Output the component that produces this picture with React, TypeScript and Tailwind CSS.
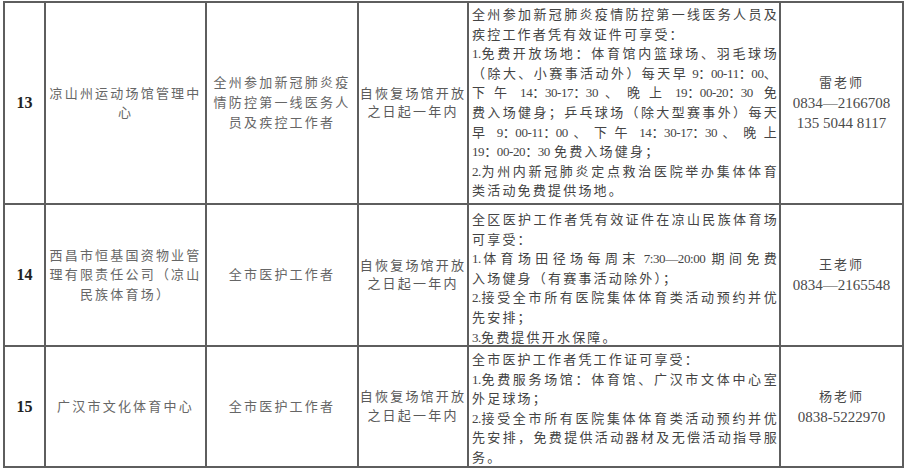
import React from "react";

type Line = { t: string; j?: boolean };

interface Row {
  no: string;
  org: string[];
  who: string[];
  when: string[];
  pt: string;
  detail: Line[];
  contact: string[];
}

const rows: Row[] = [
  {
    no: "13",
    org: ["凉山州运动场馆管理中", "心"],
    who: ["全州参加新冠肺炎疫", "情防控第一线医务人", "员及疾控工作者"],
    when: ["自恢复场馆开放", "之日起一年内"],
    pt: "pt-[2px]",
    detail: [
      { t: "全州参加新冠肺炎疫情防控第一线医务人员及", j: true },
      { t: "疾控工作者凭有效证件可享受：" },
      { t: "1.免费开放场地：体育馆内篮球场、羽毛球场", j: true },
      { t: "（除大、小赛事活动外）每天早 9：00-11：00、", j: true },
      { t: "下午 14：30-17：30、晚上 19：00-20：30 免", j: true },
      { t: "费入场健身；乒乓球场（除大型赛事外）每天", j: true },
      { t: "早 9：00-11：00、下午 14：30-17：30、晚上", j: true },
      { t: "19：00-20：30 免费入场健身；" },
      { t: "2.为州内新冠肺炎定点救治医院举办集体体育", j: true },
      { t: "类活动免费提供场地。" },
    ],
    contact: ["雷老师", "0834—2166708", "135 5044 8117"],
  },
  {
    no: "14",
    org: ["西昌市恒基国资物业管", "理有限责任公司（凉山", "民族体育场）"],
    who: ["全市医护工作者"],
    when: ["自恢复场馆开放", "之日起一年内"],
    pt: "pt-[5px]",
    detail: [
      { t: "全区医护工作者凭有效证件在凉山民族体育场", j: true },
      { t: "可享受：" },
      { t: "1.体育场田径场每周末 7:30—20:00 期间免费", j: true },
      { t: "入场健身（有赛事活动除外）；" },
      { t: "2.接受全市所有医院集体体育类活动预约并优", j: true },
      { t: "先安排；" },
      { t: "3.免费提供开水保障。" },
    ],
    contact: ["王老师", "0834—2165548"],
  },
  {
    no: "15",
    org: ["广汉市文化体育中心"],
    who: ["全市医护工作者"],
    when: ["自恢复场馆开放", "之日起一年内"],
    pt: "pt-[3px]",
    detail: [
      { t: "全市医护工作者凭工作证可享受：" },
      { t: "1.免费服务场馆：体育馆、广汉市文体中心室", j: true },
      { t: "外足球场；" },
      { t: "2.接受全市所有医院集体体育类活动预约并优", j: true },
      { t: "先安排，免费提供活动器材及无偿活动指导服", j: true },
      { t: "务。" },
    ],
    contact: ["杨老师", "0838-5222970"],
  },
];

// digits / times are kept as one block with tight spacing;
// spaces become fixed gaps so justification spreads over the CJK characters
function Txt({ s }: { s: string }) {
  const parts = s.split(/([0-9][0-9：:\-—.]*| )/);
  return (
    <>
      {parts.map((p, i) => {
        if (i % 2 === 0) return <React.Fragment key={i}>{p}</React.Fragment>;
        if (p === " ") return <span key={i} className="inline-block w-[4px]" />;
        return (
          <span key={i} className="inline-block tracking-[-0.4px]">
            {p}
          </span>
        );
      })}
    </>
  );
}

const cell = "border-r-2 border-b-2 border-[#5e5e5e]";
const center = `${cell} flex items-center justify-center text-center`;

function Lines({ lines }: { lines: string[] }) {
  return (
    <div className="whitespace-nowrap">
      {lines.map((l, i) => (
        <div key={i}>{l}</div>
      ))}
    </div>
  );
}

export default function App() {
  return (
    <div className="min-h-[474px] w-[907px] bg-white pt-px font-['Liberation_Serif','Noto_Sans_CJK_SC',serif]">
      <div className="ml-[3px] grid w-fit grid-cols-[41px_161px_152px_110px_312px_123px] grid-rows-[202px_142px_121px] border-l-2 border-t-2 border-[#5e5e5e]">
        {rows.map(r => (
          <React.Fragment key={r.no}>
            {/* No. */}
            <div className={`${center} text-[16px] font-bold text-[#222]`}>{r.no}</div>

            {/* Venue */}
            <div className={`${center} text-[13px] leading-[19.5px] tracking-[2.2px] text-[#666]`}>
              <Lines lines={r.org} />
            </div>

            {/* Eligible */}
            <div className={`${center} text-[13px] leading-[20px] tracking-[2.2px] text-[#666]`}>
              <Lines lines={r.who} />
            </div>

            {/* Period */}
            <div className={`${center} text-[13px] leading-[18.5px] tracking-[2.2px] text-[#5a5a5a]`}>
              <Lines lines={r.when} />
            </div>

            {/* Benefits */}
            <div className={`${cell} ${r.pt} pl-[3px] text-[13px] leading-[19.6px] tracking-[2.2px] text-[#444]`}>
              {r.detail.map((l, i) => (
                <div key={i} className={l.j ? "text-justify [text-align-last:justify]" : ""}>
                  <Txt s={l.t} />
                </div>
              ))}
            </div>

            {/* Contact */}
            <div className={`${center} leading-[20px] text-[#4a4a4a]`}>
              <div className="whitespace-nowrap">
                {r.contact.map((c, i) => (
                  <div key={i} className={i === 0 ? "text-[13px] tracking-[2px]" : "text-[15px] tracking-normal"}>
                    {c}
                  </div>
                ))}
              </div>
            </div>
          </React.Fragment>
        ))}
      </div>
    </div>
  );
}
